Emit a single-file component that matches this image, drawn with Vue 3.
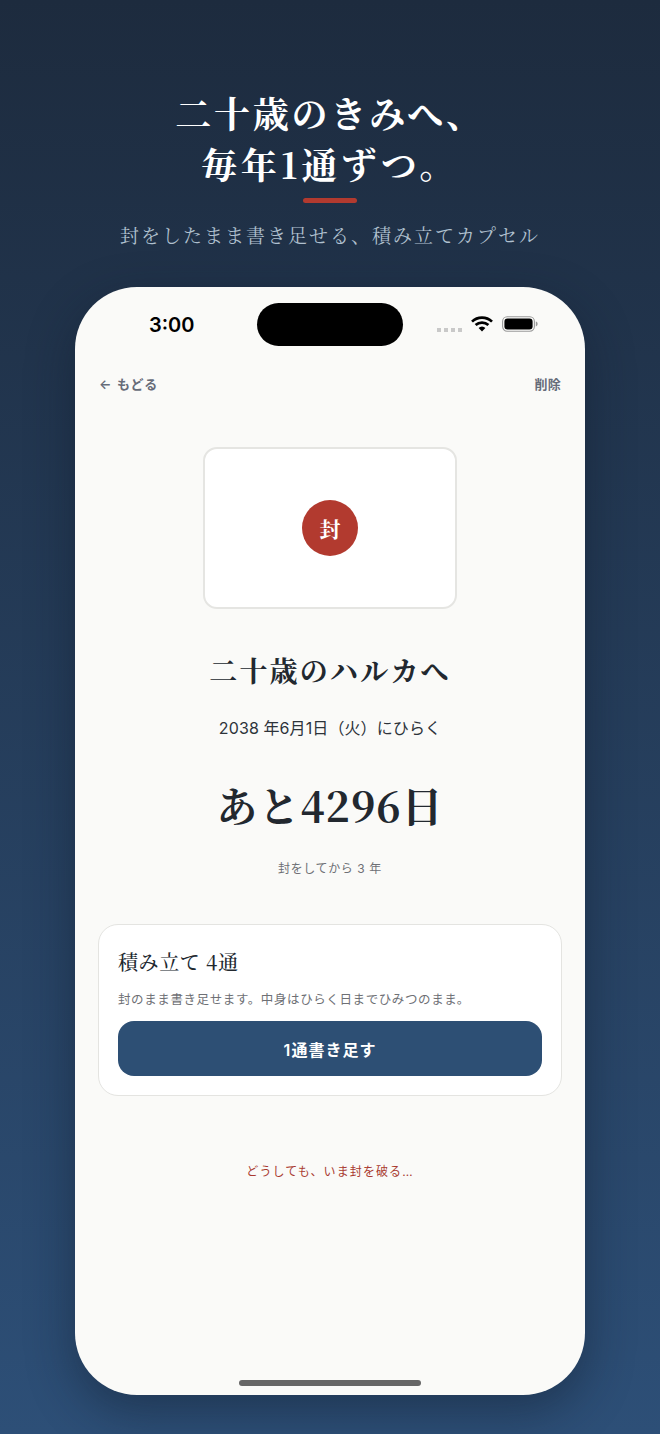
<script setup>
const title = ['二十歳のきみへ、', '毎年1通ずつ。']
</script>

<template>
  <main class="page">
    <header class="hero">
      <h1 class="headline">
        <span v-for="line in title" :key="line" class="headline-line">{{ line }}</span>
      </h1>
      <div class="accent"></div>
      <p class="tagline">封をしたまま書き足せる、積み立てカプセル</p>
    </header>

    <section class="phone">
      <div class="status">
        <span class="time">3:00</span>
        <div class="island"></div>
        <div class="status-icons">
          <span class="dots"><i></i><i></i><i></i><i></i></span>
          <svg class="wifi" width="22" height="16" viewBox="0 0 22 16">
            <path d="M1 5.6a14.4 14.4 0 0 1 20 0" fill="none" stroke="#000" stroke-width="2.7" />
            <path d="M4.6 9.1a9.3 9.3 0 0 1 12.8 0" fill="none" stroke="#000" stroke-width="2.7" />
            <path d="M7.6 12a4.6 4.6 0 0 1 6.8 0L11 15.4z" fill="#000" />
          </svg>
          <svg class="battery" width="36" height="16" viewBox="0 0 36 16">
            <rect x="0.6" y="0.8" width="31.8" height="14.4" rx="4.6" fill="none" stroke="#9a9a9a" stroke-width="1.1" />
            <rect x="2.4" y="2.6" width="28.2" height="10.8" rx="3.2" fill="#000" />
            <path d="M33.8 5.6c1.2.3 1.8 1.2 1.8 2.4s-.6 2.1-1.8 2.4z" fill="#9a9a9a" />
          </svg>
        </div>
      </div>

      <nav class="nav">
        <span class="nav-link back"><span class="arrow">←</span>もどる</span>
        <span class="nav-link">削除</span>
      </nav>

      <div class="envelope">
        <div class="seal">封</div>
      </div>

      <h2 class="name">二十歳のハルカへ</h2>
      <p class="open-date">2038 年6月1日（火）にひらく</p>
      <p class="countdown">あと4296日</p>
      <p class="since">封をしてから 3 年</p>

      <div class="card">
        <h3 class="card-title">積み立て 4通</h3>
        <p class="card-text">封のまま書き足せます。中身はひらく日までひみつのまま。</p>
        <button class="add" type="button">1通書き足す</button>
      </div>

      <p class="break">どうしても、いま封を破る…</p>
      <div class="home"></div>
    </section>
  </main>
</template>

<style>
html, body { margin: 0; padding: 0; }
</style>

<style scoped>
.page {
  --serif: "Noto Serif CJK JP", "Liberation Serif", "Noto Sans CJK JP", serif;
  --sans: Inter, "Noto Sans CJK JP", sans-serif;
  box-sizing: border-box;
  width: 660px;
  height: 1434px;
  overflow: hidden;
  padding-top: 87px;
  background: linear-gradient(180deg, #1d2b3e 0%, #2d4f77 100%);
  font-family: var(--sans);
}
.hero { display: flex; flex-direction: column; align-items: center; }
.headline {
  margin: 0;
  display: flex;
  flex-direction: column;
  align-items: center;
  color: #fff;
  font-family: var(--serif);
  font-size: 36px;
  font-weight: 700;
  line-height: 51px;
  letter-spacing: 2.8px;
}
.headline-line:nth-child(2) { letter-spacing: 3.8px; }
.accent {
  width: 54px;
  height: 5px;
  margin-top: 9px;
  border-radius: 3px;
  background: #b23a2f;
}
.tagline {
  margin: 18px 0 0;
  color: #b0c0cf;
  font-family: var(--serif);
  font-size: 19px;
  line-height: 28px;
  letter-spacing: 2px;
}
.phone {
  position: relative;
  box-sizing: border-box;
  width: 510px;
  height: 1108px;
  margin: 38px auto 0;
  padding: 0 23px;
  display: flex;
  flex-direction: column;
  align-items: center;
  border-radius: 62px;
  background: #fafaf8;
  box-shadow: 0 16px 48px rgba(15, 27, 42, 0.45);
  color: #22282f;
}
.status {
  align-self: stretch;
  position: relative;
  height: 75px;
  margin: 0 -23px;
}
.time {
  position: absolute;
  left: 74px;
  top: 26px;
  color: #000;
  font-size: 20px;
  font-weight: 600;
  line-height: 24px;
}
.island {
  position: absolute;
  left: 182px;
  top: 16px;
  width: 146px;
  height: 43px;
  border-radius: 22px;
  background: #000;
}
.status-icons {
  position: absolute;
  left: 362px;
  top: 28px;
  display: flex;
  align-items: center;
}
.dots { display: flex; gap: 3px; margin-top: 13px; margin-right: 9px; }
.dots i { width: 4px; height: 4px; background: #c9c9c9; }
.wifi { margin-top: 1px; }
.battery { margin-left: 9px; }
.nav {
  align-self: stretch;
  display: flex;
  justify-content: space-between;
  height: 20px;
  margin-top: 12px;
  padding: 0 1px;
  color: #666c79;
  font-size: 13px;
  font-weight: 600;
  line-height: 20px;
}
.nav-link { letter-spacing: 0.2px; }
.back { letter-spacing: 0.7px; }
.arrow { margin-right: 5px; }
.envelope {
  box-sizing: border-box;
  width: 254px;
  height: 162px;
  margin-top: 53px;
  display: flex;
  align-items: center;
  justify-content: center;
  border: 2px solid #e5e5e2;
  border-radius: 14px;
  background: #fff;
}
.seal {
  width: 56px;
  height: 56px;
  display: flex;
  align-items: center;
  justify-content: center;
  border-radius: 50%;
  background: #b23a2f;
  color: #fff;
  font-family: var(--serif);
  font-size: 21px;
  font-weight: 700;
}
.name {
  margin: 41px 0 0;
  font-family: var(--serif);
  font-size: 28px;
  font-weight: 700;
  line-height: 40px;
  letter-spacing: 2.2px;
}
.open-date {
  margin: 26px 0 0;
  font-size: 16px;
  line-height: 24px;
  letter-spacing: 0.1px;
  color: #2d333a;
}
.countdown {
  margin: 35px 0 0;
  font-family: var(--serif);
  font-size: 41px;
  font-weight: 700;
  line-height: 60px;
  letter-spacing: 0.9px;
}
.since {
  margin: 25px 0 0;
  color: #6e7075;
  font-size: 12px;
  line-height: 18px;
  letter-spacing: 0.6px;
}
.card {
  box-sizing: border-box;
  align-self: stretch;
  height: 172px;
  margin-top: 46px;
  padding: 19px 19px 19px;
  border: 1px solid #e4e4e1;
  border-radius: 20px;
  background: #fff;
}
.card-title {
  margin: 0;
  font-family: var(--serif);
  font-size: 20px;
  font-weight: 500;
  line-height: 36px;
  letter-spacing: 0.6px;
}
.card-text {
  margin: 11px 0 0;
  color: #6e7075;
  font-size: 12.5px;
  line-height: 18px;
  letter-spacing: 0.6px;
}
.add {
  display: block;
  width: 100%;
  height: 55px;
  margin-top: 12px;
  border: 0;
  border-radius: 16px;
  background: #2d4f74;
  color: #fff;
  font-family: var(--sans);
  font-size: 16px;
  font-weight: 600;
  letter-spacing: 1px;
}
.break {
  margin: 67px 0 0;
  color: #a93a30;
  font-size: 12px;
  line-height: 18px;
  letter-spacing: 1.1px;
}
.home {
  position: absolute;
  left: 164px;
  bottom: 9px;
  width: 182px;
  height: 6px;
  border-radius: 3px;
  background: #666;
}
</style>
